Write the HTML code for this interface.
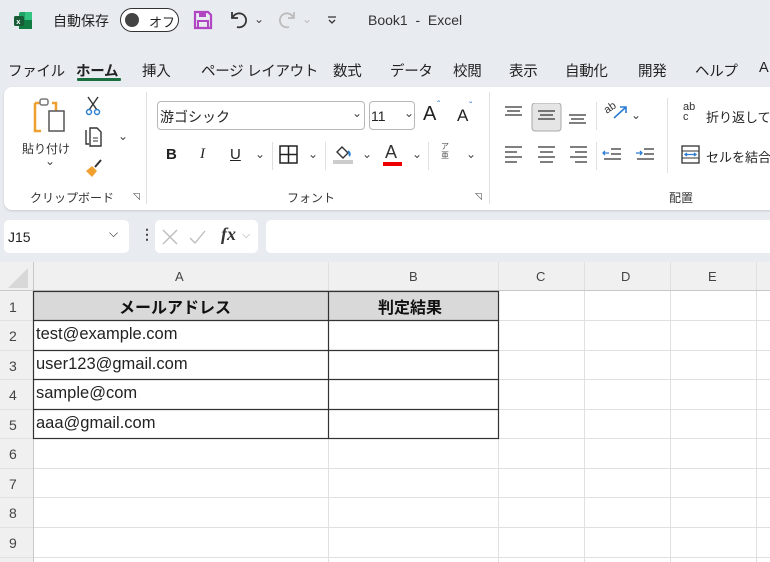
<!DOCTYPE html>
<html><head><meta charset="utf-8"><style>
*{margin:0;padding:0;box-sizing:border-box}
body{width:770px;height:562px;overflow:hidden;background:#e8ebf0;font-family:"Liberation Sans","Noto Sans CJK JP",sans-serif;color:#222;position:relative}
.a{position:absolute;white-space:nowrap}
.t{font-size:14px}
.s{font-size:13px}
.sm{font-size:12px;color:#333}
.chev{font-size:12px;color:#444}
.tab{position:absolute;white-space:nowrap;top:60px;font-size:14.5px;letter-spacing:-0.3px}
.box{position:absolute;background:#fff;border:1px solid #b8b8b8;border-radius:4px}
.vl{position:absolute;width:1px;background:#e0e0e0}
.grid{position:absolute;left:0;top:262px;width:770px;height:300px;background:#fff}
</style></head><body>
<svg class="a" style="left:13px;top:11px" width="20" height="19" viewBox="0 0 20 19"><rect x="6" y="1" width="13" height="17" rx="2" fill="#21a366"/><rect x="12" y="1" width="7" height="8" fill="#33c481"/><rect x="6" y="9" width="13" height="9" fill="#107c41"/><rect x="1" y="5" width="10" height="10" rx="1.5" fill="#185c37"/><text x="3.2" y="13" font-size="7.5" fill="#fff" font-family="Liberation Sans" font-weight="bold">x</text></svg>
<div class="a t" style="left:53px;top:11px">自動保存</div>
<div class="a" style="left:120px;top:8px;width:59px;height:24px;border:1.5px solid #333;border-radius:12px;background:#fff"></div>
<div class="a" style="left:125px;top:13px;width:14px;height:14px;border-radius:50%;background:#444"></div>
<div class="a s" style="left:149px;top:12px">オフ</div>
<svg class="a" style="left:193px;top:10px" width="20" height="20" viewBox="0 0 20 20"><path d="M2 2h13l3 3v13H2z" fill="none" stroke="#b146c2" stroke-width="2.2"/><rect x="6" y="2" width="7" height="5" fill="#b146c2"/><rect x="5" y="11" width="10" height="7" fill="none" stroke="#b146c2" stroke-width="2"/></svg>
<svg class="a" style="left:228px;top:8px" width="22" height="22" viewBox="0 0 22 22"><path d="M4 4v6h6M4.5 10A7 7 0 1 1 9 19" fill="none" stroke="#333" stroke-width="1.8"/></svg>
<div class="a chev" style="left:254px;top:12px">⌄</div>
<svg class="a" style="left:276px;top:8px" width="22" height="22" viewBox="0 0 22 22"><path d="M18 4v6h-6M17.5 10A7 7 0 1 0 13 19" fill="none" stroke="#bbb" stroke-width="1.8"/></svg>
<div class="a chev" style="left:302px;top:12px;color:#bbb">⌄</div>
<svg class="a" style="left:326px;top:15px" width="12" height="10"><path d="M2 2h8M3 5l3 3 3-3" stroke="#333" stroke-width="1.3" fill="none"/></svg>
<div class="a t" style="left:368px;top:12px;color:#333">Book1 &nbsp;- &nbsp;Excel</div>
<div class="tab" style="left:8px">ファイル</div>
<div class="tab" style="left:76px;font-weight:bold">ホーム</div>
<div class="a" style="left:77px;top:78px;width:44px;height:3px;background:#1b6e3e;border-radius:1px"></div>
<div class="tab" style="left:142px">挿入</div>
<div class="tab" style="left:201px">ページ レイアウト</div>
<div class="tab" style="left:333px">数式</div>
<div class="tab" style="left:390px">データ</div>
<div class="tab" style="left:453px">校閲</div>
<div class="tab" style="left:509px">表示</div>
<div class="tab" style="left:565px">自動化</div>
<div class="tab" style="left:638px">開発</div>
<div class="tab" style="left:695px">ヘルプ</div>
<div class="tab" style="left:759px">A</div>
<div class="a" style="left:4px;top:87px;width:780px;height:123px;background:#fff;border-radius:8px;box-shadow:0 1px 2px rgba(0,0,0,.15)"></div>
<svg class="a" style="left:32px;top:97px" width="38" height="38" viewBox="0 0 38 38"><path d="M3 6h5M20 6h4v8M3 6v28h6" fill="none" stroke="#f0a030" stroke-width="2.5"/><rect x="8" y="2" width="8" height="6" rx="2" fill="#fff" stroke="#777" stroke-width="1.5"/><rect x="17" y="14" width="15" height="20" fill="#fff" stroke="#555" stroke-width="1.5"/></svg>
<div class="a sm" style="left:22px;top:140px">貼り付け</div>
<div class="a chev" style="left:45px;top:154px">⌄</div>
<svg class="a" style="left:85px;top:96px" width="16" height="20" viewBox="0 0 16 20"><path d="M3 1l9 13M13 1L4 14" stroke="#333" stroke-width="1.4"/><circle cx="4" cy="16" r="2.5" fill="none" stroke="#2b7cd3" stroke-width="1.4"/><circle cx="12" cy="16" r="2.5" fill="none" stroke="#2b7cd3" stroke-width="1.4"/></svg>
<svg class="a" style="left:83px;top:127px" width="20" height="20" viewBox="0 0 20 20"><path d="M3 3v14h3" fill="none" stroke="#333" stroke-width="1.4"/><path d="M7 1h7l4 4v14H7z" fill="#fff" stroke="#333" stroke-width="1.4"/><path d="M10 11h5M10 14h5" stroke="#333"/></svg>
<div class="a chev" style="left:118px;top:129px">⌄</div>
<svg class="a" style="left:84px;top:158px" width="20" height="20" viewBox="0 0 20 20"><path d="M2 13l6-5 5 5-5 6z" fill="#f0a030"/><path d="M11 9l6-7" stroke="#333" stroke-width="2"/></svg>
<div class="a" style="left:30px;top:189px;font-size:12px;color:#333">クリップボード</div>
<div class="a" style="left:133px;top:191px;font-size:9px;color:#444">◹</div>
<div class="vl" style="left:146px;top:92px;height:112px"></div>
<div class="box" style="left:157px;top:101px;width:208px;height:29px"></div>
<div class="a t" style="left:160px;top:107px">游ゴシック</div>
<div class="a chev" style="left:352px;top:106px">⌄</div>
<div class="box" style="left:369px;top:101px;width:46px;height:29px"></div>
<div class="a t" style="left:371px;top:108px">11</div>
<div class="a chev" style="left:404px;top:106px">⌄</div>
<div class="a" style="left:423px;top:103px;font-size:20px">A</div><div class="a" style="left:437px;top:100px;font-size:10px;color:#2b7cd3">ˆ</div>
<div class="a" style="left:457px;top:106px;font-size:17px">A</div><div class="a" style="left:469px;top:101px;font-size:10px;color:#2b7cd3">ˇ</div>
<div class="a" style="left:166px;top:146px;font-size:15px;font-weight:bold">B</div>
<div class="a" style="left:200px;top:146px;font-size:15px;font-style:italic;font-family:'Liberation Serif'">I</div>
<div class="a" style="left:230px;top:146px;font-size:15px;text-decoration:underline">U</div>
<div class="a chev" style="left:255px;top:147px">⌄</div>
<div class="vl" style="left:272px;top:142px;height:28px"></div>
<svg class="a" style="left:279px;top:145px" width="19" height="19" viewBox="0 0 19 19"><path d="M1 1h17v17H1zM9.5 1v17M1 9.5h17" fill="none" stroke="#222" stroke-width="1.5"/></svg>
<div class="a chev" style="left:308px;top:147px">⌄</div>
<div class="vl" style="left:325px;top:142px;height:28px"></div>
<svg class="a" style="left:333px;top:143px" width="22" height="22" viewBox="0 0 22 22"><path d="M4 9l5-5 6 6-5 5z" fill="none" stroke="#333" stroke-width="1.4"/><path d="M15 8q3 3 1 5" stroke="#2b7cd3" stroke-width="2" fill="none"/><rect x="0" y="17" width="20" height="4" fill="#ccc"/></svg>
<div class="a chev" style="left:362px;top:147px">⌄</div>
<div class="a" style="left:385px;top:142px;font-size:18px;color:#333">A</div>
<div class="a" style="left:383px;top:162px;width:19px;height:4px;background:#e00"></div>
<div class="a chev" style="left:412px;top:147px">⌄</div>
<div class="vl" style="left:428px;top:142px;height:28px"></div>
<div class="a" style="left:441px;top:142px;font-size:8px;color:#555;line-height:9px">ア<br>亜</div>
<div class="a chev" style="left:466px;top:147px">⌄</div>
<div class="a" style="left:287px;top:189px;font-size:12px;color:#333">フォント</div>
<div class="a" style="left:475px;top:191px;font-size:9px;color:#444">◹</div>
<div class="vl" style="left:489px;top:92px;height:112px"></div>
<svg class="a" style="left:503px;top:103px" width="110" height="30" viewBox="0 0 110 30"><g stroke="#333" stroke-width="1.3"><path d="M2 4h17M4 8h13M2 12h17"/></g><rect x="29" y="0" width="29" height="28" rx="3" fill="#e5e5e5" stroke="#aaa"/><g stroke="#333" stroke-width="1.3"><path d="M35 8h17M37 12h13M35 16h17"/><path d="M66 12h17M68 16h13M66 20h17"/></g></svg>
<div class="vl" style="left:596px;top:102px;height:28px"></div>
<div class="a" style="left:604px;top:102px;font-size:11px;color:#333;transform:rotate(-35deg)">ab</div>
<svg class="a" style="left:612px;top:104px" width="16" height="16"><path d="M2 14L14 3M8 3h6v6" stroke="#2b7cd3" stroke-width="1.6" fill="none"/></svg>
<div class="a chev" style="left:631px;top:108px">⌄</div>
<svg class="a" style="left:503px;top:145px" width="155" height="18" viewBox="0 0 155 18"><g stroke="#333" stroke-width="1.3"><path d="M2 2h17M2 7h12M2 12h17M2 17h12"/><path d="M35 2h17M37 7h13M35 12h17M37 17h13"/><path d="M67 2h17M72 7h12M67 12h17M72 17h12"/><path d="M108 4h10M108 9h10M101 14h17"/><path d="M141 4h10M141 9h10M134 14h17"/></g><path d="M100 8h6M102 6l-2 2 2 2" stroke="#2b7cd3" stroke-width="1.3" fill="none"/><path d="M133 8h6M137 6l2 2-2 2" stroke="#2b7cd3" stroke-width="1.3" fill="none"/></svg>
<div class="vl" style="left:596px;top:142px;height:28px"></div>
<div class="vl" style="left:667px;top:98px;height:75px"></div>
<div class="a" style="left:683px;top:102px;font-size:11px;color:#333;line-height:10px">ab<br>c</div>
<div class="a s" style="left:706px;top:107px">折り返して全</div>
<svg class="a" style="left:681px;top:145px" width="19" height="19"><rect x="1" y="1" width="17" height="17" fill="#fff" stroke="#333" stroke-width="1.3"/><path d="M1 6h17M1 13h17" stroke="#333"/><path d="M4 9.5h11M6 8l-2 1.5L6 11M13 8l2 1.5L13 11" stroke="#2b7cd3" stroke-width="1.3" fill="none"/></svg>
<div class="a s" style="left:706px;top:147px">セルを結合</div>
<div class="a" style="left:669px;top:189px;font-size:12px;color:#333">配置</div>
<div class="a" style="left:4px;top:220px;width:125px;height:33px;background:#fff;border-radius:5px"></div>
<div class="a t" style="left:8px;top:229px">J15</div>
<div class="a" style="left:109px;top:226px;font-size:12px">⌵</div>
<div class="a" style="left:140px;top:226px;font-size:14px;font-weight:bold;color:#444">⋮</div>
<div class="a" style="left:155px;top:220px;width:103px;height:33px;background:#fff;border-radius:5px"></div>
<svg class="a" style="left:161px;top:228px" width="55" height="18"><path d="M2 2l14 14M16 2L2 16" stroke="#bbb" stroke-width="1.3"/><path d="M29 10l5 5 10-12" stroke="#bbb" stroke-width="1.3" fill="none"/></svg>
<div class="a" style="left:221px;top:224px;font-size:18px;font-style:italic;font-weight:bold;font-family:'Liberation Serif';color:#333">fx</div>
<div class="a" style="left:242px;top:229px;font-size:11px;color:#999">⌵</div>
<div class="a" style="left:266px;top:220px;width:510px;height:33px;background:#fff;border-radius:5px"></div>
<div class="grid">
<svg width="770" height="300" style="position:absolute;left:0;top:0">
<rect x="0" y="0" width="770" height="29" fill="#f0f0f0"/>
<rect x="0" y="0" width="33" height="300" fill="#f0f0f0"/>
<path d="M8 26L28 6V26z" fill="#d8d8d8"/>
<g stroke="#e0e0e0" stroke-width="1">
<path d="M328.5 0V300M498.5 0V300M584.5 0V300M670.5 0V300M756.5 0V300"/>
<path d="M33 58.5H770M33 88.5H770M33 117.5H770M33 147.5H770M33 176.5H770M33 206.5H770M33 235.5H770M33 265.5H770M33 295.5H770"/>
<path d="M0 58.5H33M0 88.5H33M0 117.5H33M0 147.5H33M0 176.5H33M0 206.5H33M0 235.5H33M0 265.5H33M0 295.5H33"/>
</g>
<path d="M0 28.5H770" stroke="#c8c8c8"/>
<path d="M33.5 0V300" stroke="#c8c8c8"/>
<rect x="33.5" y="29.5" width="295" height="29" fill="#d9d9d9"/>
<rect x="328.5" y="29.5" width="170" height="29" fill="#d9d9d9"/>
<g stroke="#333" stroke-width="1.2" fill="none">
<rect x="33.5" y="29.5" width="465" height="147"/>
<path d="M328.5 29.5V176.5M33.5 58.5H498.5M33.5 88.5H498.5M33.5 117.5H498.5M33.5 147.5H498.5"/>
</g>
</svg>
<div class="a" style="left:175px;top:7px;font-size:13px;color:#444">A</div>
<div class="a" style="left:409px;top:7px;font-size:13px;color:#444">B</div>
<div class="a" style="left:536px;top:7px;font-size:13px;color:#444">C</div>
<div class="a" style="left:621px;top:7px;font-size:13px;color:#444">D</div>
<div class="a" style="left:708px;top:7px;font-size:13px;color:#444">E</div>
<div class="a" style="left:9px;top:37px;font-size:14px;color:#444">1</div>
<div class="a" style="left:9px;top:66px;font-size:14px;color:#444">2</div>
<div class="a" style="left:9px;top:96px;font-size:14px;color:#444">3</div>
<div class="a" style="left:9px;top:125px;font-size:14px;color:#444">4</div>
<div class="a" style="left:9px;top:155px;font-size:14px;color:#444">5</div>
<div class="a" style="left:9px;top:184px;font-size:14px;color:#444">6</div>
<div class="a" style="left:9px;top:214px;font-size:14px;color:#444">7</div>
<div class="a" style="left:9px;top:243px;font-size:14px;color:#444">8</div>
<div class="a" style="left:9px;top:273px;font-size:14px;color:#444">9</div>
<div class="a" style="left:119px;top:32px;font-size:16px;font-weight:bold;color:#111">メールアドレス</div>
<div class="a" style="left:378px;top:32px;font-size:16px;font-weight:bold;color:#111">判定結果</div>
<div class="a" style="left:36px;top:63px;font-size:16.5px;color:#222">test@example.com</div>
<div class="a" style="left:36px;top:93px;font-size:16.5px;color:#222">user123@gmail.com</div>
<div class="a" style="left:36px;top:122px;font-size:16.5px;color:#222">sample@com</div>
<div class="a" style="left:36px;top:152px;font-size:16.5px;color:#222">aaa@gmail.com</div>
</div>
</body></html>
